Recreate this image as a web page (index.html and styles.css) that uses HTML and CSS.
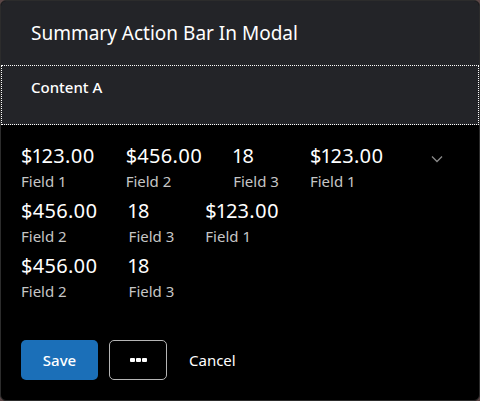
FILE: index.html
```html
<!DOCTYPE html>
<html lang="en">
<head>
<meta charset="utf-8">
<link rel="stylesheet" href="styles.css">
</head>
<body>
<div class="modal">
  <div class="modal-header">
    <h1 class="modal-title">Summary Action Bar In Modal</h1>
  </div>
  <div class="modal-content">
    <div class="content-label">Content A</div>
  </div>
  <div class="modal-body">
    <div class="summary">
      <div class="summary-items">
        <div class="item"><div class="value">$123.00</div><div class="label">Field 1</div></div>
        <div class="item"><div class="value">$456.00</div><div class="label">Field 2</div></div>
        <div class="item"><div class="value">18</div><div class="label">Field 3</div></div>
        <div class="item"><div class="value">$123.00</div><div class="label">Field 1</div></div>
        <div class="item"><div class="value">$456.00</div><div class="label">Field 2</div></div>
        <div class="item"><div class="value">18</div><div class="label">Field 3</div></div>
        <div class="item"><div class="value">$123.00</div><div class="label">Field 1</div></div>
        <div class="item"><div class="value">$456.00</div><div class="label">Field 2</div></div>
        <div class="item"><div class="value">18</div><div class="label">Field 3</div></div>
      </div>
      <button class="chevron" aria-label="Expand">
        <svg width="12" height="8" viewBox="0 0 12 8"><path d="M1 1.5 L6 6.5 L11 1.5" fill="none" stroke="#8a8a8a" stroke-width="1.3"/></svg>
      </button>
    </div>
    <div class="actions">
      <button class="btn btn-primary">Save</button>
      <button class="btn btn-more" aria-label="More"><span class="dot"></span><span class="dot"></span><span class="dot"></span></button>
      <button class="btn btn-link">Cancel</button>
    </div>
  </div>
</div>
</body>
</html>
```
FILE: styles.css
```css
* { box-sizing: border-box; }
html, body { margin: 0; padding: 0; height: 100%; background: #5a4646; }
body { font-family: "Noto Sans", "Open Sans", sans-serif; color: #fff; }
.modal {
  width: 480px; height: 401px;
  background: #000;
  border: 1px solid #2c2c2c;
  border-radius: 6px;
  overflow: hidden;
  display: flex; flex-direction: column;
}
.modal-header {
  background: #232428;
  height: 64px;
  padding: 19px 30px 0;
}
.modal-title { margin: 0; font-size: 19px; font-weight: 400; line-height: 26px; }
.modal-content {
  background: #232428;
  height: 60px;
  border: 1px dotted #fff;
  padding: 10px 29px 0;
}
.content-label { font-size: 15px; font-weight: 500; line-height: 22px; }
.modal-body { flex: 1; padding: 19px 20px 0; display: flex; flex-direction: column; }
.summary { display: flex; align-items: flex-start; }
.summary-items {
  width: 363px;
  display: flex; flex-wrap: wrap;
  column-gap: 31px; row-gap: 8px;
}
.value {
  font-size: 20px; line-height: 24px; font-weight: 400;
  letter-spacing: 0.3px; font-variant-numeric: proportional-nums;
}
.label { font-size: 15px; line-height: 20px; color: #c6c6c6; margin-top: 3px; }
.chevron {
  margin-left: 43px; margin-top: 7px;
  background: none; border: 0; padding: 4px; cursor: pointer;
  display: flex;
}
.actions { margin-top: 39px; display: flex; align-items: center; gap: 11px; }
.btn {
  font-family: inherit; font-size: 15px; font-weight: 500;
  height: 40px; border-radius: 5px; color: #fff; cursor: pointer;
}
.btn-primary { background: #1b6fb8; border: 0; width: 77px; }
.btn-more {
  background: #000; border: 1px solid #b5b5b5; width: 58px;
  display: flex; align-items: center; justify-content: center; gap: 1px;
}
.dot { width: 5px; height: 4px; background: #fff; border-radius: 1px; }
.btn-link { background: none; border: 0; padding: 0 0 0 11px; font-weight: 400; }
```
